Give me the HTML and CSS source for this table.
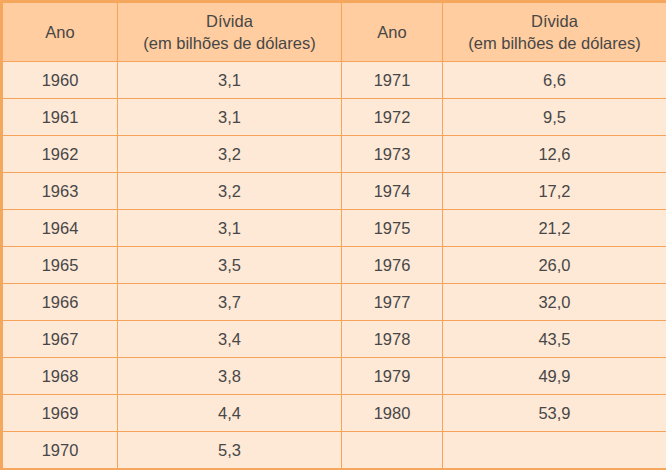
FILE: index.html
```html
<!DOCTYPE html>
<html lang="pt">
<head>
<meta charset="utf-8">
<link rel="stylesheet" href="styles.css">
</head>
<body>
<table class="debt">
  <colgroup>
    <col class="c-year"><col class="c-val"><col class="c-year2"><col class="c-val2">
  </colgroup>
  <thead>
    <tr>
      <th>Ano</th>
      <th>Dívida<br>(em bilhões de dólares)</th>
      <th>Ano</th>
      <th>Dívida<br>(em bilhões de dólares)</th>
    </tr>
  </thead>
  <tbody>
    <tr><td>1960</td><td>3,1</td><td>1971</td><td>6,6</td></tr>
    <tr><td>1961</td><td>3,1</td><td>1972</td><td>9,5</td></tr>
    <tr><td>1962</td><td>3,2</td><td>1973</td><td>12,6</td></tr>
    <tr><td>1963</td><td>3,2</td><td>1974</td><td>17,2</td></tr>
    <tr><td>1964</td><td>3,1</td><td>1975</td><td>21,2</td></tr>
    <tr><td>1965</td><td>3,5</td><td>1976</td><td>26,0</td></tr>
    <tr><td>1966</td><td>3,7</td><td>1977</td><td>32,0</td></tr>
    <tr><td>1967</td><td>3,4</td><td>1978</td><td>43,5</td></tr>
    <tr><td>1968</td><td>3,8</td><td>1979</td><td>49,9</td></tr>
    <tr><td>1969</td><td>4,4</td><td>1980</td><td>53,9</td></tr>
    <tr><td>1970</td><td>5,3</td><td></td><td></td></tr>
  </tbody>
</table>
</body>
</html>
```

FILE: styles.css
```css
html, body {
  margin: 0;
  padding: 0;
  background: #ffffff;
}

.debt {
  width: 666px;
  height: 469px;
  border-collapse: collapse;
  table-layout: fixed;
  border: 3px solid #f6a75e;
  font-family: "Liberation Sans", Arial, sans-serif;
  font-size: 16.5px;
  color: #474747;
}

.c-year { width: 116px; }
.c-val { width: 224px; }
.c-year2 { width: 101px; }
.c-val2 { width: 225px; }

.debt th,
.debt td {
  border: 1px solid #f5a35a;
  text-align: center;
  vertical-align: middle;
  padding: 0;
}

.debt th {
  background: #ffcd9f;
  font-weight: normal;
  line-height: 22px;
  height: 57px;
  padding-bottom: 1px;
}

.debt td {
  background: #fee9d7;
  height: 36px;
}
```
